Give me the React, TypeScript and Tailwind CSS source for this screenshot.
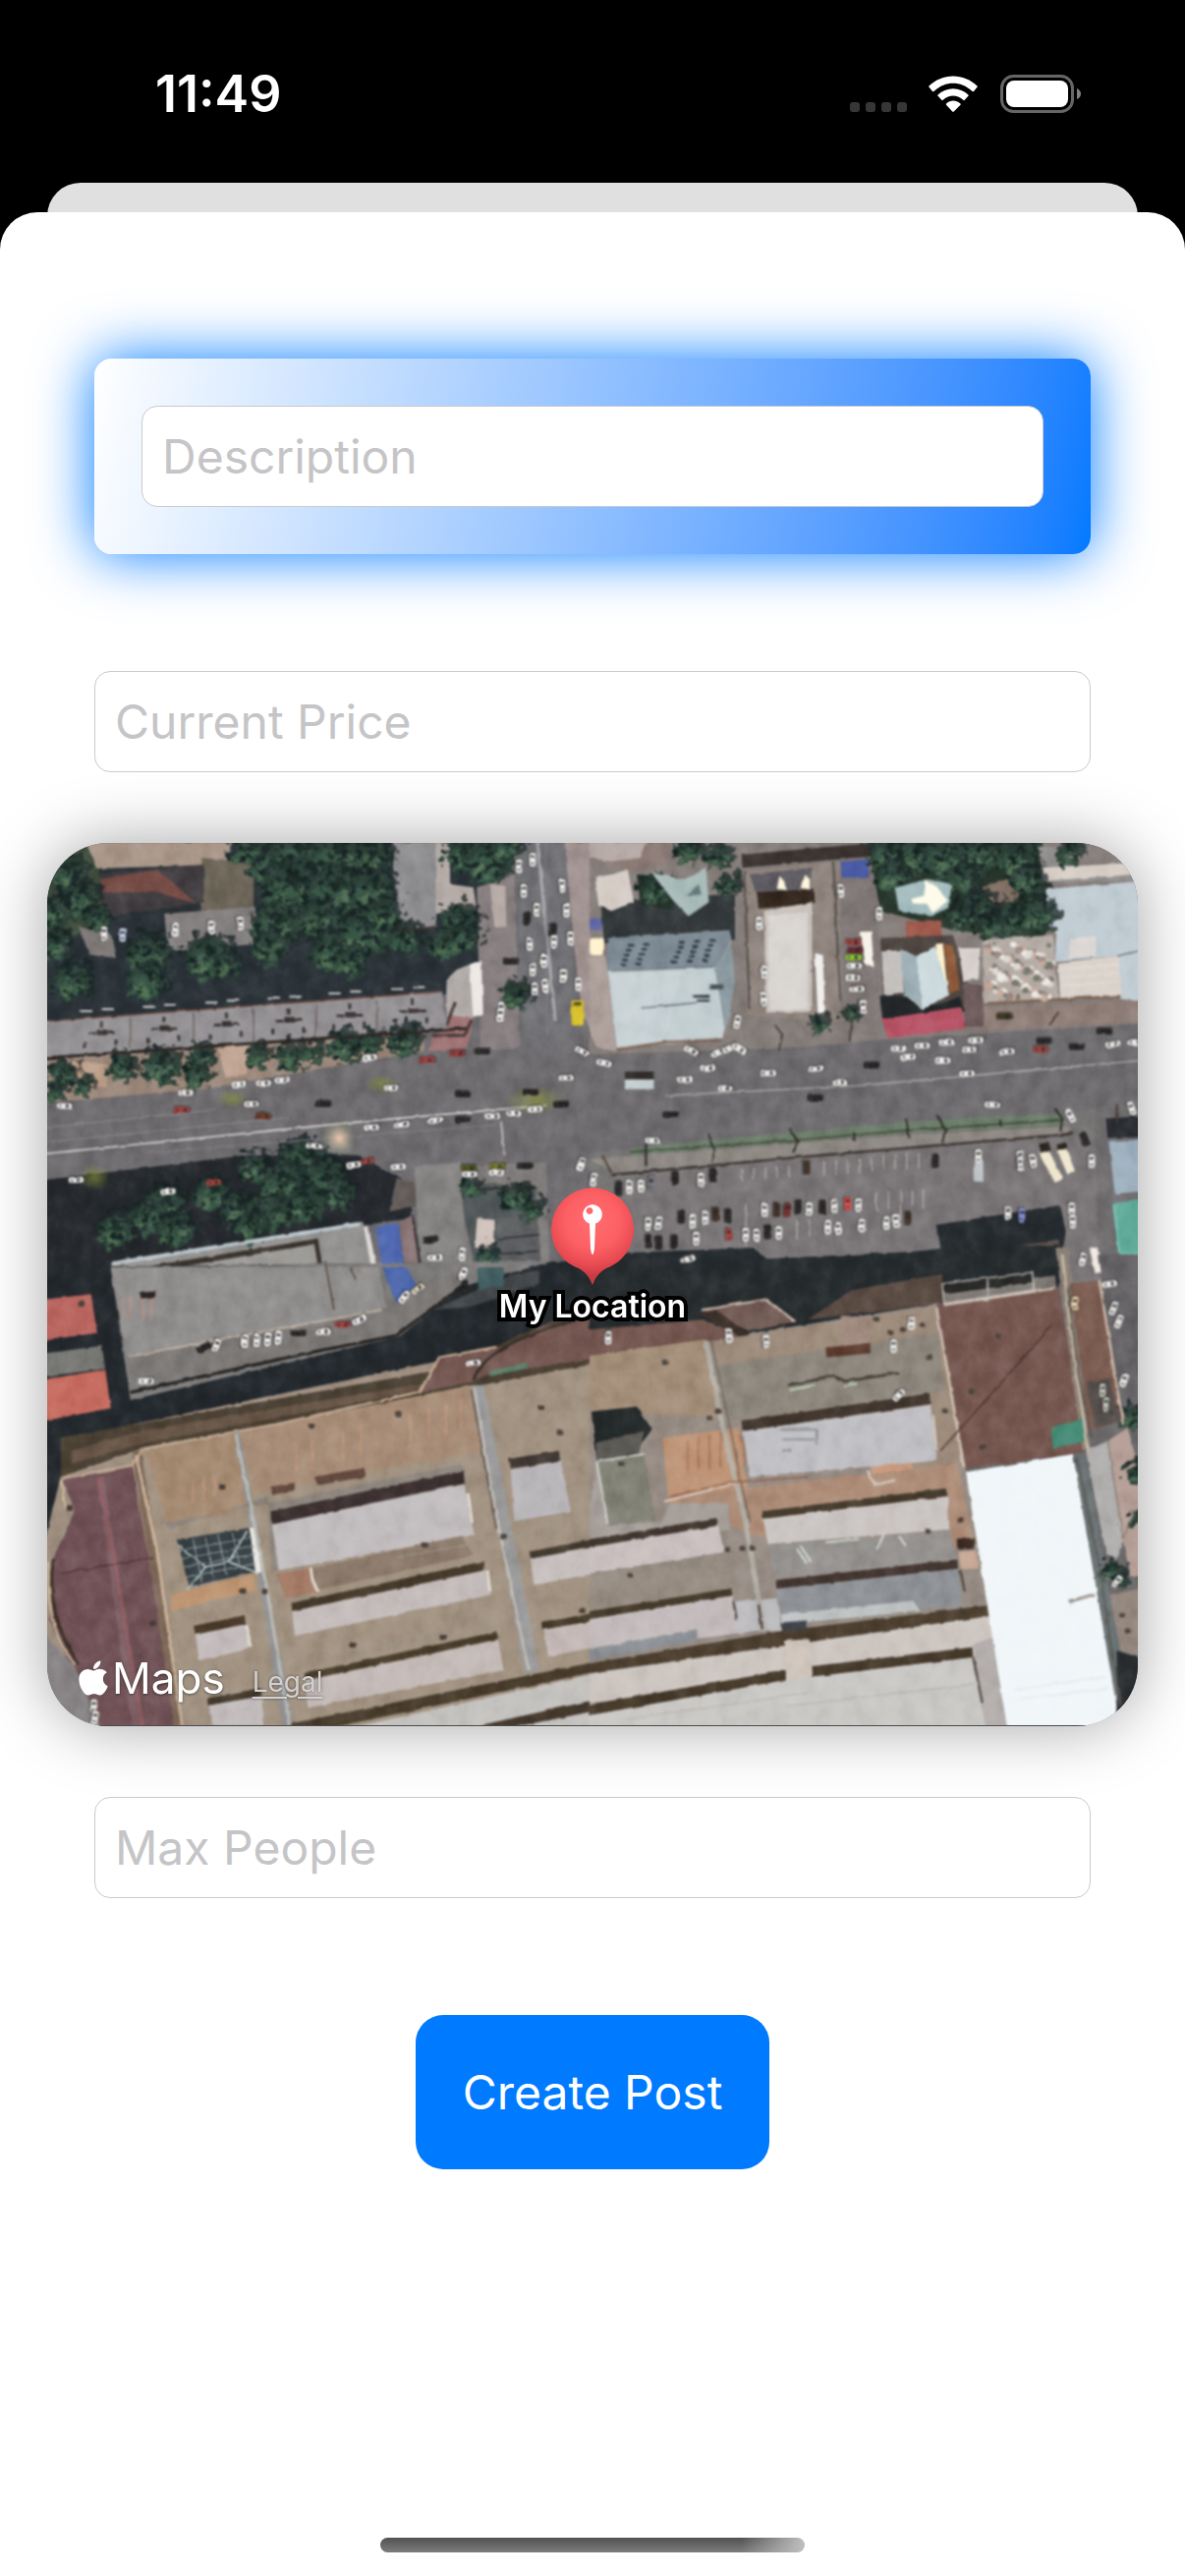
import React from "react";
import { FaApple } from "react-icons/fa";

type Shape = [fill: string, points: string];
type Stroke = [color: string, width: number, d: string];
type Blob = [x: number, y: number, r: number];
type Car = [x: number, y: number, angle: number, color: string];

/* Each quadrant of the aerial view is drawn in its own local units. */
const NW = "translate(-8 -18) scale(0.3635 0.3333)";
const NE = "translate(552 -18) scale(0.37 0.3333)";
const SW = "translate(-8 432) scale(0.3635 0.3333)";
const SE = "translate(552 432) scale(0.37 0.3333)";

const nwGround: Shape[] = [
  ["#6e6c6f", "0,0 1600,0 1600,1400 0,1400"],
  ["#2b3338", "0,0 1260,0 1240,470 1120,520 0,610"],
  ["#3d4b3c", "0,50 160,50 180,290 110,330 0,380"],
  ["#a89689", "130,50 540,50 520,120 160,132"],
  ["#6c6558", "455,100 600,110 600,260 450,280"],
  ["#413d40", "165,150 460,120 462,235 185,280"],
  ["#754b45", "170,165 330,135 380,180 440,240 330,205 180,205"],
  ["#858080", "350,270 600,250 640,360 360,385"],
  ["#7d7775", "110,310 200,330 215,405 140,395"],
  ["#8f8e91", "985,50 1125,50 1110,308 1004,318"],
  ["#b3aaa6", "1110,50 1150,50 1150,180 1215,190 1225,260 1110,270"],
  ["#877e7f", "1225,190 1330,150 1345,680 1235,690"],
  ["#b5a9a4", "1262,180 1305,185 1308,310 1275,312"],
  ["#949194", "0,600 1128,508 1140,618 0,712"],
  ["#b0aba9", "1140,470 1170,440 1240,410 1243,582 1215,586 1140,615"],
  ["#ece8e4", "1205,425 1236,412 1243,580 1214,582"],
  ["#a07576", "1150,580 1215,590 1200,680 1090,690 1100,645 1140,620"],
  ["#9c897c", "0,716 1080,632 1075,690 800,740 500,800 0,850"],
  ["#c3a796", "500,680 585,670 580,760 520,770"],
  ["#bda18b", "90,720 190,730 190,800 100,790"],
  ["#a29492", "1470,50 1600,50 1600,650 1545,630 1515,560"],
  ["#717074", "1335,50 1470,50 1512,640 1400,700 1350,620"],
  ["#262a2e", "0,1085 560,1010 800,1000 900,1010 1045,1100 1040,1200 200,1335 230,1400 0,1400"],
  ["#635b58", "1000,1080 1050,1090 1055,1160 980,1180"],
  ["#868383", "1050,1040 1180,1030 1200,1400 1070,1400"],
  ["#807c7b", "1180,1040 1420,1030 1430,1400 1200,1400"],
  ["#535a5c", "1180,1090 1390,1100 1400,1340 1230,1400 1190,1200"],
  ["#939290", "200,1338 905,1210 965,1400 215,1400"],
  ["#3c352f", "315,1345 780,1262 800,1400 790,1400 770,1280 320,1362"],
  ["#9d9b98", "320,1366 770,1280 785,1400 320,1400"],
  ["#5069b0", "942,1228 1005,1212 1030,1400 965,1400"],
  ["#8b7678", "1005,1212 1045,1190 1065,1400 1032,1400"],
  ["#cfc2bb", "1225,1200 1275,1205 1275,1290 1220,1290"],
  ["#5f6062", "1280,1200 1395,1195 1405,1340 1290,1345"],
  ["#3c6461", "1225,1310 1285,1300 1285,1400 1220,1400"],
];

const nwTrees: Blob[] = [
  [70, 150, 60], [110, 230, 60], [40, 270, 50], [45, 370, 45], [90, 480, 60], [300, 400, 65], [300, 480, 62],
  [470, 410, 75], [520, 430, 40], [640, 130, 60], [580, 80, 50], [720, 100, 80], [830, 100, 90], [930, 100, 60],
  [700, 200, 95], [820, 210, 90], [930, 200, 70], [660, 310, 75], [780, 290, 65], [640, 375, 55], [820, 390, 70],
  [910, 330, 85], [870, 420, 50], [1020, 350, 50], [1170, 300, 60], [1130, 370, 50], [1190, 350, 45], [1180, 90, 55],
  [1250, 110, 75], [1310, 70, 45], [960, 270, 50], [160, 290, 40], [1330, 520, 45],
  [230, 740, 42], [340, 740, 55], [450, 710, 40], [610, 710, 36], [700, 710, 45], [760, 700, 32], [850, 680, 50],
  [1020, 660, 50], [920, 670, 40], [60, 760, 42], [120, 800, 32], [440, 770, 42], [40, 820, 30],
  [600, 1050, 48], [730, 1030, 70], [680, 1100, 70], [800, 1090, 70], [830, 1130, 50], [480, 1130, 55], [560, 1180, 60],
  [350, 1160, 60], [300, 1200, 55], [210, 1240, 55], [380, 1240, 55], [650, 1190, 60], [740, 1160, 60], [590, 1230, 50],
  [1330, 1140, 45], [1210, 1110, 32], [1380, 1180, 32], [1250, 1320, 30],
];

const nePitchedRoof: Shape[] = [
  ["#9fb1b7", "855,375 898,400 915,562 868,520"],
  ["#ccdade", "898,400 950,368 990,518 915,562"],
];

const neGround: Shape[] = [
  ["#857d79", "0,0 1600,0 1600,640 0,700"],
  ["#343a3c", "30,230 400,210 400,350 40,360"],
  ["#8b7a76", "0,50 220,50 215,120 120,140 0,110"],
  ["#b6aaa7", "0,50 160,50 140,100 60,110 0,100"],
  ["#d5ccc6", "15,160 60,150 105,135 122,235 60,262 25,245"],
  ["#26332b", "130,150 230,160 230,260 140,240"],
  ["#3b3431", "418,90 770,55 775,95 420,130"],
  ["#90847e", "425,140 690,110 690,600 430,580"],
  ["#5e5c62", "440,150 610,130 610,215 465,225"],
  ["#35281f", "460,205 618,195 620,240 465,255"],
  ["#c9c2bd", "480,262 612,235 612,570 486,572"],
  ["#d9d5d0", "490,275 600,265 600,560 495,565"],
  ["#f1efec", "620,395 642,395 648,578 628,578"],
  ["#7f7776", "690,100 790,100 800,640 700,640"],
  ["#4a5ba5", "690,112 768,105 768,160 695,160"],
  ["#2a392f", "765,50 1245,50 1290,280 1240,350 1000,320 800,260"],
  ["#837064", "1080,190 1160,160 1185,220 1120,265"],
  ["#9c584b", "870,295 965,290 970,350 870,350"],
  ["#504743", "800,345 1000,335 1040,480 1030,560 810,600"],
  ["#24282a", "798,520 870,520 915,560 1020,525 1030,570 805,592"],
  ["#c3c0be", "803,385 860,382 865,510 810,518"],
  ["#fff1d0", "952,362 972,360 986,512 965,515"],
  ["#8f5c3c", "974,360 1000,370 1020,500 990,515"],
  ["#b85668", "805,592 1020,555 1035,620 820,650"],
  ["#6b5859", "1030,480 1080,490 1085,615 1030,615"],
  ["#d8d2cd", "1015,375 1075,375 1070,470 1028,475"],
  ["#b5aca6", "1080,350 1275,335 1290,530 1085,548"],
  ["#f6f2ea", "745,325 775,325 782,430 755,425"],
  ["#93918f", "1235,65 1290,65 1330,130 1500,110 1500,170 1245,175"],
  ["#d8cfc8", "1240,130 1500,115 1500,150 1250,170"],
  ["#c1ccd3", "1255,195 1520,170 1520,540 1460,530 1450,400 1280,415 1285,320 1262,310"],
  ["#ded9d5", "1320,345 1392,338 1394,398 1320,405"],
  ["#d9d2cb", "1288,420 1455,398 1465,520 1295,530"],
  ["#907f79", "1085,558 1520,535 1520,600 1080,625"],
  ["#7f8c95", "50,345 385,320 390,345 345,440 50,445"],
  ["#c3ced1", "50,445 350,432 375,600 365,655 75,682"],
  ["#8c9aa1", "345,440 390,345 400,480 375,640"],
  ["#c9d2d5", "60,455 250,445 210,660 78,672"],
  ["#ad9f9a", "0,400 45,400 75,690 20,680 0,640"],
  ["#6e6c6f", "0,700 400,700 800,655 1600,600 1600,1000 0,1090"],
  ["#777573", "0,1000 1300,890 1400,860 1440,1400 0,1400"],
  ["#6d7f6c", "110,985 870,905 1290,880 1300,915 870,940 110,1010"],
  ["#8f8984", "0,1020 880,945 1320,920 1320,940 950,975 70,1060"],
  ["#7a7677", "60,1070 1330,945 1430,1000 1450,1400 60,1400"],
  ["#716e70", "1390,860 1600,830 1600,1400 1400,1400"],
  ["#292c31", "1420,895 1600,885 1600,950 1425,955"],
  ["#9fb1bf", "1428,965 1600,955 1600,1110 1445,1125"],
  ["#60aa99", "1440,1155 1600,1130 1600,1310 1455,1310"],
  ["#272c30", "953,1220 1295,1160 1310,1240 1290,1400 985,1400"],
  ["#272c30", "0,1310 450,1290 540,1370 700,1330 980,1290 1000,1400 0,1400"],
  ["#5a514b", "985,1325 1290,1265 1295,1315 985,1380"],
];

const neOverTrees: Shape[] = [
  ["#a9bcba", "170,145 262,165 320,128 328,235 272,278 230,230"],
  ["#6d8283", "265,215 300,180 308,212"],
  ["#a6bec0", "840,190 930,165 995,180 990,250 940,278 850,260"],
  ["#fffbea", "925,170 955,190 985,230 945,268 928,240 890,240 885,225 920,215"],
];

const neTrees: Blob[] = [
  [270, 80, 40], [350, 95, 42], [180, 200, 48], [380, 190, 35], [820, 90, 60], [900, 90, 60], [980, 100, 70],
  [1080, 90, 60], [830, 160, 50], [1020, 170, 50], [1170, 100, 60], [1200, 170, 50], [1060, 250, 50], [1150, 290, 55],
  [1230, 280, 55], [1100, 310, 40], [1020, 280, 40], [630, 610, 28], [720, 580, 26], [1320, 85, 40],
];

const swGround: Shape[] = [
  ["#9f9082", "0,0 1600,0 1600,1450 0,1450"],
  ["#24292e", "0,0 1600,-20 1600,180 1280,250 260,480 60,640 0,900"],
  ["#7e7c7b", "200,0 1440,-20 1180,60 1010,210 255,405"],
  ["#918f8d", "200,0 950,0 975,130 245,270"],
  ["#7d7977", "245,272 930,150 1090,40 1200,0 1180,60 1010,205 260,365"],
  ["#b9655f", "0,100 145,82 162,200 0,225"],
  ["#777773", "0,265 175,240 185,310 0,335"],
  ["#c66c60", "0,345 185,312 200,430 0,472"],
  ["#45484a", "1330,20 1400,10 1400,50 1210,120 1100,130"],
  ["#415d5f", "1225,0 1300,0 1300,60 1230,70"],
  ["#4e68ad", "960,0 1030,0 1055,55 1000,110"],
  ["#4b4134", "60,520 1110,315 1280,240 1600,80 1600,290 1090,400 280,555 60,640"],
  ["#675547", "90,600 280,540 1070,375 1100,350 280,500 90,560"],
  ["#755752", "1120,280 1300,240 1410,180 1600,150 1600,270 1250,330 1210,350 1070,380"],
  ["#a19281", "280,555 1600,285 1600,1450 400,1450"],
  ["#a58a72", "300,560 540,505 590,740 360,790"],
  ["#a78d78", "560,500 1210,360 1245,560 600,690"],
  ["#705256", "60,640 260,605 395,1450 180,1450 80,1200 30,1080 35,900 100,740"],
  ["#806165", "160,640 180,635 295,1450 265,1450"],
  ["#878385", "0,1110 40,1150 100,1220 170,1400 170,1450 0,1450"],
  ["#806b5b", "260,560 285,560 410,1450 385,1450"],
  ["#939294", "545,505 560,500 720,1450 690,1450"],
  ["#8e867e", "350,780 600,730 1180,600 1190,620 1210,820 650,930 640,700 360,800"],
  ["#3d3231", "648,745 1188,620 1190,660 650,785"],
  ["#c2bdbe", "652,785 1190,662 1218,818 670,925"],
  ["#394246", "385,832 590,795 605,930 420,975"],
  ["#eae7e1", "588,795 603,795 622,930 606,935"],
  ["#bd9572", "370,1000 600,935 610,985 370,1050"],
  ["#a67e69", "665,935 760,920 780,995 690,1010"],
  ["#8c7a6b", "760,920 1180,820 1215,880 780,985"],
  ["#463b2b", "706,1025 1245,897 1247,925 708,1050"],
  ["#c4bcbb", "708,1050 1250,925 1265,1000 715,1125"],
  ["#473827", "432,1095 575,1062 578,1088 437,1122"],
  ["#c4bcbc", "437,1122 578,1090 590,1165 448,1200"],
  ["#473b2a", "742,1240 1282,1112 1285,1135 745,1262"],
  ["#c4bbb8", "745,1262 1285,1137 1300,1230 752,1345"],
  ["#44392c", "470,1315 620,1285 622,1310 472,1338"],
  ["#c2bcbc", "472,1338 622,1310 630,1400 485,1400"],
  ["#473b2b", "710,1392 1600,1195 1600,1225 800,1410 690,1410"],
  ["#c4c2bf", "900,1400 1600,1230 1600,1450 800,1450"],
  ["#463a2e", "1230,1400 1600,1310 1600,1345 1300,1410"],
  ["#9b9b9b", "1210,360 1245,360 1400,1230 1360,1240"],
  ["#423a35", "1315,585 1455,560 1458,590 1320,615"],
  ["#b9b6ba", "1320,618 1460,590 1488,745 1330,775"],
  ["#463d31", "1372,868 1600,820 1600,845 1375,890"],
  ["#c6bfbe", "1375,890 1600,845 1600,925 1385,970"],
  ["#463b2b", "1408,1085 1600,1045 1600,1070 1412,1106"],
  ["#c4b8b6", "1412,1106 1600,1070 1600,1150 1425,1188"],
];

const seGround: Shape[] = [
  ["#968c84", "0,280 960,110 1160,1450 0,1450"],
  ["#272c2f", "0,0 1290,-70 1290,60 960,110 0,280"],
  ["#755851", "0,190 310,160 430,210 0,275"],
  ["#745d57", "310,130 490,95 570,165 440,195"],
  ["#3c312a", "300,140 350,130 445,212 415,212"],
  ["#5a4b43", "720,70 970,20 970,110 600,160"],
  ["#a38e79", "0,270 320,220 360,460 0,440"],
  ["#9d8b7b", "330,225 950,120 1030,610 930,640 420,460"],
  ["#8e877d", "340,300 960,200 975,380 380,470"],
  ["#be9477", "200,520 410,490 440,720 220,740"],
  ["#c99b7f", "770,600 880,575 890,620 780,640"],
  ["#ad8d78", "220,700 1010,600 1060,850 450,820"],
  ["#252a2a", "5,440 130,425 172,495 120,570 20,590"],
  ["#5b5954", "20,535 150,500 135,570 20,590"],
  ["#828277", "22,590 150,570 180,770 55,792"],
  ["#a59e99", "0,720 20,600 50,790 200,775 220,720 380,720 390,800 0,880"],
  ["#42372f", "418,468 935,385 937,418 420,500"],
  ["#c0bfc3", "422,500 938,420 955,590 440,640"],
  ["#463d2f", "475,745 980,675 985,698 477,768"],
  ["#cac5c3", "478,768 985,700 990,800 490,845"],
  ["#969290", "490,850 990,800 1010,900 510,950"],
  ["#453833", "512,955 1012,892 1014,920 514,982"],
  ["#8e9297", "514,982 1015,920 1025,1035 525,1060"],
  ["#bec2c3", "525,1060 890,1018 910,1050 530,1090"],
  ["#42372f", "0,830 350,765 354,788 0,855"],
  ["#c9c0bf", "0,855 355,790 370,870 0,935"],
  ["#968c82", "0,935 380,870 400,980 0,1050"],
  ["#463b2b", "0,1050 390,980 392,1002 0,1075"],
  ["#c4bcbc", "0,1075 392,1003 405,1080 520,1100 0,1180"],
  ["#8e9297", "0,1165 295,1105 297,1140 0,1200"],
  ["#bcbbbd", "400,1020 515,1010 530,1110 410,1110"],
  ["#4c3f30", "0,1210 530,1110 1095,1032 1098,1065 0,1240"],
  ["#ccc5c0", "0,1240 1100,1066 1125,1200 0,1330"],
  ["#d0c6bd", "535,1140 605,1135 612,1250 540,1258"],
  ["#473b2c", "0,1335 540,1230 540,1260 0,1368"],
  ["#473b2c", "612,1218 1053,1160 1055,1190 614,1250"],
  ["#cac8c5", "0,1368 540,1260 1055,1192 1085,1330 1155,1300 1160,1450 0,1450"],
  ["#b3aeac", "1055,1150 1115,1130 1160,1420 1090,1420"],
  ["#755750", "955,115 1290,65 1365,565 1035,615"],
  ["#807b76", "970,75 1280,25 1285,65 975,110"],
  ["#292927", "975,50 1218,15 1220,45 978,82"],
  ["#f1f6f9", "1035,625 1330,570 1450,1340 1440,1450 1155,1450"],
  ["#8a8077", "1282,-60 1318,-60 1375,560 1355,560"],
  ["#7b5c51", "1320,50 1400,40 1465,470 1375,500"],
  ["#56504d", "1365,350 1430,340 1460,470 1390,490"],
  ["#666467", "1400,-40 1600,-40 1600,560 1470,480"],
  ["#6b7476", "1330,570 1362,565 1480,1300 1450,1330"],
  ["#b0afae", "1365,560 1425,530 1470,830 1450,890 1420,870"],
  ["#b59f97", "1425,530 1480,490 1600,960 1490,940 1465,830"],
  ["#94877e", "1430,1000 1600,960 1600,1250 1460,1170"],
  ["#292c2e", "1450,1170 1600,1220 1600,1450 1450,1380"],
  ["#448a74", "1270,492 1360,462 1365,530 1275,552"],
];

const seTrees: Blob[] = [[1495, 460, 40], [1500, 630, 34], [1505, 770, 26], [1430, 930, 32], [1460, 960, 22]];

const nwLines: Stroke[] = [
  ["#c9c5c4", 6, "M0 1005 L900 905 L1420 855"],
  ["#89868a", 4, "M0 925 L500 868"],
  ["#87848a", 4, "M0 970 L700 892"],
  ["#87848a", 3, "M300 1000 L1280 915"],
  ["#2c2825", 9, "M0 712 L440 678 L1200 620"],
  ["#6f4d42", 5, "M0 600 L1125 508"],
  ["#6a605b", 4, "M255 590 V680 M432 572 V672 M600 560 V660 M775 545 V648 M945 535 V635"],
  ["#a9a8ad", 9, "M1395 50 L1445 600"],
  ["#7d7b80", 5, "M1420 50 L1420 640"],
  ["#d7d2cd", 4, "M1293 905 L1303 1010"],
  ["#4a3b36", 9, "M1100 642 H1190 L1210 595 M1140 610 L1165 540"],
  ["#bac4ca", 12, "M205 1338 L895 1218"],
  ["#332c2a", 6, "M1045 1190 L1075 1400 M1225 1110 H1395"],
  ["#dedbd8", 14, "M915 1225 L945 1400"],
  ["#30343a", 5, "M1285 1263 L1400 1250 M1285 1310 L1400 1300"],
  ["#3b332e", 6, "M1005 320 L1110 312"],
];
const neLines: Stroke[] = [
  ["#b9b6b2", 4, "M210 825 L740 795 L1520 718"],
  ["#37302d", 7, "M60 1068 L560 1015 L950 978 L1330 942"],
  ["#474f3f", 6, "M110 998 L560 962 L870 932 L1300 900"],
  ["#332f2c", 6, "M325 940 L345 990 L338 1030 M550 925 L572 965 L560 1000 M870 895 L880 955 M955 885 L978 930 L970 970 M1280 865 L1300 895 L1295 935 M155 965 V1040 M728 935 V965 M1130 900 V920"],
  ["#bdb9b6", 3, "M420 1050 v36 M452 1047 v36 M484 1045 v36 M516 1042 v36 M548 1040 v36 M645 1025 v45 M678 1022 v45 M710 1020 v45 M742 1017 v45 M775 1012 v45 M808 1008 v45 M840 1005 v45 M872 1002 v45 M905 1000 v45"],
  ["#bdb9b6", 3, "M430 1155 v130 M570 1205 v60 M605 1205 v50 M790 1120 v60 M822 1118 v55 M855 1115 v90 M888 1112 v50 M918 1110 v60"],
  ["#55504d", 6, "M425 140 L440 560 M670 110 L690 540"],
  ["#4a403a", 6, "M520 690 L530 640 L510 610 M715 660 L720 600 L705 570 M1265 610 L1290 570 M60 1060 L35 1010 M1450 850 V910"],
  ["#616e74", 4, "M145 558 L295 542 M60 445 L345 432 M1450 400 L1520 380"],
  ["#7a5f50", 8, "M75 685 L215 662 L365 655 M1085 545 L1290 532 L1460 522"],
  ["#7bc4b4", 6, "M1442 1158 L1458 1308 H1520"],
  ["#e8ddd1", 4, "M1295 440 L1455 425 M1295 465 L1455 450 M1295 490 L1455 478"],
];
const swLines: Stroke[] = [
  ["#c2ab94", 7, "M60 645 L260 605 L285 555 L680 475 L1065 380 L1120 275 L1280 243"],
  ["#cdb49d", 8, "M270 570 L330 870 L400 1400"],
  ["#945f63", 8, "M165 640 L210 890 L290 1400"],
  ["#55393b", 5, "M60 935 L320 885"],
  ["#b8b9b4", 9, "M550 510 L590 720 L640 1000 L700 1400"],
  ["#c0bdb9", 7, "M1218 370 L1280 760 L1370 1230"],
  ["#6a5f57", 5, "M1210 375 L1280 800"],
  ["#282624", 10, "M255 382 L750 262 L1000 208 L1190 50"],
  ["#bcaea2", 6, "M250 272 L960 130"],
  ["#363129", 8, "M1215 345 C1240 260 1380 180 1600 140"],
  ["#b7c6c6", 5, "M388 848 L465 915 L530 900 L582 805 M465 915 L415 985 M530 900 L605 930"],
  ["#8f9ea0", 3, "M390 865 L595 825 M398 890 L600 850 M405 915 L605 875 M412 945 L605 905 M430 830 L455 960 M465 825 L490 950 M500 815 L525 940 M540 810 L565 930"],
  ["#ceb99b", 6, "M60 650 L75 740 M25 900 Q20 1120 100 1210"],
  ["#3e3129", 9, "M40 890 Q15 1060 110 1210"],
  ["#e0dbd0", 8, "M760 920 L765 955 L780 990 M1200 690 L1212 780 M1255 925 L1262 990 M580 1090 L592 1160"],
  ["#5f534b", 5, "M800 -20 L825 130 M870 0 L885 40"],
  ["#5b7e68", 16, "M1260 325 L1365 300"],
  ["#989287", 4, "M1000 885 L1300 828 M1300 828 L1600 770 M810 1195 L1290 1080"],
  ["#bd967c", 5, "M430 650 v70 M460 640 v70 M490 640 v60 M720 540 v80 M765 530 v90 M850 500 v90 M900 480 v90 M1040 450 v100 M1090 430 v90 M1140 420 v90 M1180 400 v100"],
];
const seLines: Stroke[] = [
  ["#d8cabb", 6, "M955 125 L1030 610 M975 115 L1280 65 M310 130 L485 98 L565 165"],
  ["#b3b0a8", 14, "M320 225 L365 480 L430 780 L480 1110"],
  ["#71655c", 4, "M335 225 L385 480 L440 780"],
  ["#4f302b", 4, "M965 560 L1130 355 L1270 180"],
  ["#c8b8a3", 8, "M1300 -40 L1330 250 L1372 560"],
  ["#5b564f", 5, "M1315 60 L1345 330 L1380 520 M1340 580 L1400 900 L1460 1340"],
  ["#3b3a31", 7, "M545 360 L640 340 L670 330 L700 348 L855 322"],
  ["#bbd0b1", 7, "M550 375 L620 360 M700 365 L735 355"],
  ["#8d5a43", 5, "M220 700 L400 655 L600 640"],
  ["#dad1c8", 6, "M205 715 L400 660 M945 450 L955 560 M765 620 L785 665 L840 650"],
  ["#cfcac5", 4, "M970 50 L975 110 L1222 70 L1218 15 Z M1095 30 V100"],
  ["#d8c4b2", 6, "M1402 40 L1468 480"],
  ["#b0adab", 3, "M540 1340 L1080 1270 M100 1380 L600 1300"],
  ["#dbe1e4", 3, "M1170 1290 L1420 1250 M1170 1320 L1430 1285"],
  ["#4e4440", 6, "M1020 925 L1032 990 M395 1020 L405 1075 M465 1030 L475 1105 M1055 1190 L1080 1330"],
  ["#d7e2e0", 5, "M580 850 L610 900 M570 860 L600 905 M790 860 L810 815 M850 820 L870 850 M650 840 L740 830"],
  ["#8a8f91", 6, "M525 495 H625 V540 M530 525 H620 M530 560 H555"],
  ["#d4d6d0", 5, "M20 595 L50 780 M22 592 L150 570"],
  ["#a8775a", 5, "M415 510 L430 600 M360 500 v110 M330 510 v110 M300 520 v100 M270 530 v90"],
  ["#9b9087", 8, "M1320 1020 L1390 998"],
  ["#7a746c", 3, "M1425 530 L1468 830 L1500 740"],
];

const W = "#eeedea";
const K = "#262423";
const R = "#a3403c";
const nwCars: Car[] = [
  [1380, 105, 0, W], [1342, 125, 0, W], [1355, 200, 0, W], [1392, 258, 0, W], [1365, 285, 0, K], [1372, 362, 0, W],
  [1412, 415, 0, W], [1380, 440, 0, W], [1416, 490, 0, W], [1386, 500, 0, W], [1462, 185, 0, W], [1475, 260, 0, W],
  [1438, 320, 0, K], [1440, 356, 0, W], [1486, 345, 0, W], [1465, 460, 0, W], [1508, 485, 0, W], [1520, 690, 120, W],
  [1475, 772, 92, W], [985, 802, 88, W], [1185, 820, 92, K], [1375, 815, 90, K], [1460, 852, 88, K], [595, 850, 90, W],
  [795, 850, 90, K], [400, 868, 92, R], [628, 888, 95, "#713a22"], [930, 922, 86, W], [1015, 912, 86, W], [1108, 900, 86, W],
  [1185, 897, 86, K], [1268, 886, 84, W], [1328, 878, 84, W], [1388, 866, 84, W], [770, 978, 88, W], [915, 1025, 82, R],
  [880, 1036, 82, W], [1005, 1042, 86, W], [103, 1082, 88, W], [70, 856, 90, W], [488, 1090, 84, R], [360, 1118, 84, W],
  [380, 320, 0, W], [480, 312, 0, W], [562, 300, 0, W], [232, 335, 0, "#c5cde3"], [180, 330, 0, W],
  [1240, 690, 90, K], [1170, 696, 90, R], [1085, 716, 90, R], [925, 710, 75, W], [680, 778, 88, W], [628, 786, 88, W],
  [560, 790, 88, W], [410, 816, 88, W], [1515, 1035, 20, W], [1550, 1085, 0, W], [1320, 415, 90, K], [1095, 1265, 80, K],
  [1108, 1320, 90, W], [1183, 1310, 5, W], [1188, 1360, 30, W], [1200, 1045, 90, "#55571f"], [1280, 1040, 90, "#6f7422"],
  [1205, 1065, 90, W], [1280, 1060, 90, W], [1358, 1040, 90, K], [1292, 560, 0, W], [1290, 580, 0, W],
];
const neCars: Car[] = [
  [40, 725, 105, W], [280, 688, 120, W], [355, 692, 60, W], [385, 680, 60, W], [412, 682, 120, W], [325, 740, 90, W],
  [262, 776, 90, W], [372, 802, 88, W], [492, 756, 88, W], [622, 742, 86, W], [775, 732, 90, K], [690, 786, 88, W],
  [850, 680, 88, W], [915, 672, 88, W], [982, 662, 88, W], [1062, 655, 88, W], [1045, 684, 88, W], [876, 706, 88, W],
  [972, 718, 88, W], [1038, 757, 88, W], [1148, 690, 86, W], [1250, 658, 88, K], [1240, 684, 88, R], [1340, 676, 90, K],
  [1440, 668, 88, W], [1415, 628, 92, K], [1500, 664, 90, W], [620, 832, 90, K], [222, 884, 90, K], [1108, 852, 92, W],
  [172, 962, 90, W], [1322, 888, -25, W], [1362, 958, -20, K], [1380, 1025, 0, W], [10, 1082, 10, W],
  [108, 1105, 0, W], [140, 1100, 0, W], [168, 1092, 0, "#777982"], [235, 1078, 0, K], [305, 1082, 0, W], [338, 1068, 0, K],
  [80, 1110, 0, K], [596, 1045, 0, "#413126"], [950, 1025, 0, K], [160, 1218, 0, W], [188, 1215, 0, W], [252, 1195, 0, K],
  [282, 1210, 0, W], [317, 1198, 0, W], [346, 1188, 0, "#413126"], [380, 1192, 0, K], [480, 1175, 0, W],
  [514, 1175, 0, "#413126"], [542, 1175, 0, "#7b3230"], [573, 1165, 0, K], [603, 1172, 0, W], [640, 1165, 0, K],
  [672, 1162, 0, W], [709, 1155, 0, "#e44a48"], [738, 1160, 0, W], [162, 1270, 0, K], [190, 1275, 0, K], [232, 1272, 0, K],
  [292, 1262, 0, W], [383, 1250, 0, R], [428, 1250, 0, W], [458, 1252, 0, W], [490, 1242, 0, K], [519, 1245, 0, W],
  [654, 1225, 0, W], [684, 1232, 0, W], [748, 1222, 0, W], [815, 1215, 0, W], [842, 1208, 0, W], [875, 1200, 0, "#413126"],
  [1068, 1010, 0, W], [1183, 1015, -5, W], [1185, 1035, -5, W], [1218, 1025, -10, W], [1150, 1185, 0, W],
  [1188, 1190, 0, "#8b98d8"], [1325, 1172, 0, W], [1328, 1210, 0, W], [1355, 1325, 10, W], [600, 1345, 0, R], [647, 1350, 0, W],
  [555, 1360, -10, W], [270, 1325, 70, W], [690, 200, 0, W], [795, 270, 0, W], [750, 555, 0, W], [725, 465, 90, W],
  [728, 428, 90, W], [725, 355, 90, R], [728, 380, 90, "#6c2730"], [725, 402, 90, "#8fc636"], [735, 498, 90, W],
  [480, 450, 0, W], [478, 530, 0, W], [465, 300, 0, W], [405, 600, 10, W], [1140, 582, 90, "#413a22"], [1490, 865, -20, W],
];
const swCars: Car[] = [
  [300, 346, 88, W], [495, 238, 20, W], [575, 225, 5, W], [608, 222, 5, W], [638, 220, 5, W], [668, 214, 5, W],
  [795, 196, 90, W], [850, 174, 90, R], [895, 160, 60, W], [725, 200, 90, K], [460, 245, 60, K], [1020, 90, 30, W],
  [1060, 65, 50, "#dad1b5"], [1185, 20, 20, W], [1190, 60, 0, K], [152, 1340, 0, W], [155, 1375, 10, W], [1215, 292, 80, W],
];
const seCars: Car[] = [
  [1440, 125, 20, W], [1455, 165, 20, W], [1470, 345, 20, W], [1430, 50, 80, W], [1410, 375, 0, "#c9c9c0"],
  [1420, 420, 0, "#c9c9c0"], [1450, 960, 30, W], [50, 215, 0, W], [835, 240, 0, W], [850, 390, 40, W],
  [382, 210, 0, W], [484, 225, 0, W], [885, 170, 0, W], [1335, 110, 0, "#efd7b4"],
];

function Shapes({ items }: { items: Shape[] }) {
  return (
    <>
      {items.map(([fill, points], i) => (
        <polygon key={i} points={points} fill={fill} />
      ))}
    </>
  );
}

function Strokes({ items }: { items: Stroke[] }) {
  return (
    <>
      {items.map(([color, width, d], i) => (
        <path key={i} d={d} stroke={color} strokeWidth={width} fill="none" strokeLinejoin="round" />
      ))}
    </>
  );
}

function Trees({ items }: { items: Blob[] }) {
  return (
    <g filter="url(#foliage)">
      {items.map(([x, y, r], i) => (
        <g key={i}>
          <circle cx={x + 8} cy={y - 12} r={r} fill="#1a2425" opacity="0.7" />
          <circle cx={x} cy={y} r={r * 0.9} fill="#2f443a" />
          <circle cx={x - r * 0.15} cy={y + r * 0.2} r={r * 0.6} fill="#3a5848" />
          <circle cx={x - r * 0.3} cy={y + r * 0.35} r={r * 0.26} fill="#557355" />
          <circle cx={x + r * 0.35} cy={y + r * 0.1} r={r * 0.2} fill="#4e6b54" />
          <circle cx={x + r * 0.1} cy={y - r * 0.35} r={r * 0.22} fill="#1e2c29" />
        </g>
      ))}
    </g>
  );
}

function Cars({ items }: { items: Car[] }) {
  return (
    <>
      {items.map(([x, y, angle, color], i) => (
        <g key={i} transform={`translate(${x} ${y}) rotate(${angle})`}>
          <rect x="-12" y="-24" width="22" height="46" rx="6" fill="#1f1d1d" opacity="0.5" />
          <rect x="-8" y="-21" width="18" height="42" rx="6" fill={color} />
          <rect x="-5" y="-12" width="12" height="8" rx="2" fill="#2c2c30" opacity="0.85" />
          <rect x="-4" y="8" width="10" height="6" rx="2" fill="#39393d" opacity="0.7" />
        </g>
      ))}
    </>
  );
}

const roofVents: [number, number][] = [[175, 630], [350, 617], [525, 604], [700, 592], [870, 576], [1045, 563]];
const windows = Array.from({ length: 5 }, (_, r) => [0, 1, 3, 4, 5].map((c) => [105 + c * 42 + (c > 1 ? 15 : 0) - r * 5, 362 + r * 15 - c * 3])).flat();

function SatelliteImage() {
  return (
    <svg
      viewBox="0 0 1110 899"
      preserveAspectRatio="xMidYMid slice"
      className="block h-full w-full"
      role="img"
      aria-label="Satellite view around my location"
    >
      <defs>
        <filter id="foliage" x="-5%" y="-5%" width="110%" height="110%" colorInterpolationFilters="sRGB">
          <feTurbulence type="fractalNoise" baseFrequency="0.045" numOctaves="4" seed="4" result="n" />
          <feDisplacementMap in="SourceGraphic" in2="n" scale="70" xChannelSelector="R" yChannelSelector="G" result="d" />
          <feColorMatrix in="n" type="matrix" values="0 0 0 0 0.09 0 0 0 0 0.14 0 0 0 0 0.14 4 3 0 0 -3.5" result="dark" />
          <feComposite in="dark" in2="d" operator="in" result="shade" />
          <feMerge>
            <feMergeNode in="d" />
            <feMergeNode in="shade" />
          </feMerge>
        </filter>
        <filter id="rough" x="0" y="0" width="100%" height="100%" colorInterpolationFilters="sRGB">
          <feTurbulence type="fractalNoise" baseFrequency="0.08" numOctaves="2" seed="9" result="n" />
          <feDisplacementMap in="SourceGraphic" in2="n" scale="3" xChannelSelector="R" yChannelSelector="G" result="d" />
          <feGaussianBlur in="d" stdDeviation="0.8" />
        </filter>
        <filter id="grain" x="0" y="0" width="100%" height="100%" colorInterpolationFilters="sRGB">
          <feTurbulence type="fractalNoise" baseFrequency="0.06 0.05" numOctaves="4" seed="12" />
          <feColorMatrix type="matrix" values="1.3 0 0 0 -0.13 1.3 0 0 0 -0.13 1.3 0 0 0 -0.13 0 0 0 0 1" />
        </filter>
        <radialGradient id="flare">
          <stop offset="0" stopColor="#f3c6b0" />
          <stop offset="0.5" stopColor="#c3b799" stopOpacity="0.5" />
          <stop offset="1" stopColor="#8a9c80" stopOpacity="0" />
        </radialGradient>
        <radialGradient id="tint">
          <stop offset="0" stopColor="#8f9a38" stopOpacity="0.6" />
          <stop offset="1" stopColor="#8f9a38" stopOpacity="0" />
        </radialGradient>
      </defs>

      <rect width="1110" height="899" fill="#6d6a6b" />
      <g filter="url(#rough)">
        <g transform={NW}>
          <Shapes items={nwGround} />
          <Trees items={nwTrees} />
          <Strokes items={nwLines} />
          {roofVents.map(([x, y], i) => (
            <g key={i} fill="#3a3434">
              <rect x={x - 38} y={y + 2} width="22" height="8" />
              <rect x={x - 14} y={y - 6} width="30" height="17" rx="4" />
              <rect x={x + 16} y={y} width="20" height="8" />
              <rect x={x - 5} y={y - 32} width="8" height="18" />
              <rect x={x - 50} y={y + 32} width="8" height="18" />
              <rect x={x + 36} y={y + 24} width="8" height="18" />
              <rect x={x - 60} y={y - 66} width="34" height="7" fill="#b9b7b6" />
              <rect x={x} y={y - 72} width="34" height="7" fill="#b9b7b6" />
            </g>
          ))}
          <ellipse cx="840" cy="955" rx="50" ry="60" fill="url(#flare)" />
          <ellipse cx="960" cy="790" rx="50" ry="30" fill="url(#tint)" />
          <ellipse cx="540" cy="835" rx="45" ry="30" fill="url(#tint)" />
          <ellipse cx="1390" cy="840" rx="90" ry="45" fill="url(#tint)" />
          <ellipse cx="155" cy="1075" rx="45" ry="40" fill="url(#tint)" />
          <Cars items={nwCars} />
          <rect x="1490" y="535" width="34" height="76" rx="6" fill="#dac42f" />
          <rect x="1497" y="540" width="20" height="10" fill="#5b5422" />
        </g>
        <g transform={NE}>
          <Shapes items={neGround} />
          <Shapes items={nePitchedRoof} />
          <Trees items={neTrees} />
          <Shapes items={neOverTrees} />
          <Strokes items={neLines} />
          {windows.map(([x, y], i) => (
            <rect key={i} x={x} y={y} width="15" height="9" fill="#35414a" />
          ))}
          <rect x="0" y="285" width="35" height="34" fill="#6168a8" />
          <rect x="0" y="345" width="40" height="52" rx="8" fill="#fff3cf" />
          <path d="M515 195 L522 155 L535 170 L543 198 Z M580 192 L590 150 L606 165 L606 196 Z" fill="#fff6dd" />
          {Array.from({ length: 90 }, (_, i) => (
            <circle
              key={i}
              cx={1092 + ((i * 67) % 183)}
              cy={362 + ((i * 41) % 167)}
              r={5 + ((i * 5) % 9)}
              fill={["#dcd8d3", "#9d8a84", "#c5a99c", "#eeeae3", "#77776c"][i % 5]}
            />
          ))}
          <rect x="285" y="518" width="45" height="9" fill="#3c4446" />
          <rect x="295" y="532" width="35" height="7" fill="#3c4446" />
          <rect x="330" y="486" width="38" height="15" fill="#4c5557" />
          <rect x="97" y="752" width="80" height="24" fill="#302c29" />
          <rect x="97" y="776" width="80" height="30" fill="#c6cfd1" />
          <path d="M1235 1000 L1262 990 L1302 1078 L1278 1092 Z M1285 990 L1308 980 L1335 1055 L1315 1068 Z" fill="#efe7d0" />
          <path d="M1240 975 L1262 962 L1270 990 L1240 1000 Z M1286 975 L1310 968 L1315 985 L1288 996 Z" fill="#2c2520" />
          <rect x="1056" y="1020" width="27" height="68" rx="6" fill="#bfc4c9" />
          <path d="M1375 1290 L1400 1290 L1412 1365 L1390 1368 Z" fill="#f0eae2" />
          <Cars items={neCars} />
        </g>
        <g transform={SW}>
          <Shapes items={swGround} />
          <Strokes items={swLines} />
          <g fill="#4a3f38">
            <path d="M770 640 L910 612 L912 640 L780 665 Z M650 670 L712 658 L712 682 L652 695 Z" fill="#634a3f" />
            {[[762, 485], [1005, 450], [1405, 427], [512, 668], [1080, 848], [630, 990], [570, 988], [880, 1155], [1458, 505], [318, 1088], [1130, 1130], [1520, 1048], [85, 735], [118, 112], [1300, 822]].map(([x, y], i) => (
              <rect key={i} x={x - 9} y={y - 8} width="18" height="16" rx="4" />
            ))}
          </g>
          <path d="M235 95 V150 M255 90 V160 M315 80 V160 M290 90 V160" stroke="#a88f88" strokeWidth="9" />
          <path d="M280 75 L325 70 L325 90 L285 95 Z" fill="#2c2422" />
          <Cars items={swCars} />
        </g>
        <g transform={SE}>
          <Shapes items={seGround} />
          <Trees items={seTrees} />
          <Strokes items={seLines} />
          <g fill="#4a423c">
            {[[210, 288], [330, 460], [355, 440], [683, 430], [978, 438], [935, 275], [862, 190], [915, 178], [828, 200], [790, 158], [88, 600], [378, 862], [420, 858], [448, 855], [930, 806], [1020, 772], [112, 940], [1125, 208], [1050, 380], [1080, 548], [535, 180], [1465, 1060], [1480, 1110], [50, 190], [848, 380]].map(([x, y], i) => (
              <rect key={i} x={x - 8} y={y - 7} width="16" height="14" rx="4" />
            ))}
          </g>
          <path d="M650 245 L772 230 L772 262 L652 275 Z" fill="#5a3a2d" />
          <path d="M690 150 L768 150 L772 230 L700 240 Z" fill="#a08a80" />
          <path d="M1010 828 L1060 825 L1060 860 L1012 862 Z" fill="#3b2923" />
          <path d="M1015 868 L1065 865 L1070 920 L1022 922 Z" fill="#c8a795" />
          <path d="M525 1085 L595 1078 L597 1105 L530 1112 Z" fill="#3e4248" />
          <Cars items={seCars} />
        </g>
      </g>
      <rect width="1110" height="899" filter="url(#grain)" opacity="0.2" className="mix-blend-soft-light" />
      <rect y="898" width="1110" height="1" fill="#4b4b4b" />
    </svg>
  );
}

function MapPin() {
  return (
    <svg width="86" height="101" viewBox="0 0 86 101" className="block" aria-hidden="true">
      <defs>
        <radialGradient id="pin" cx="43" cy="36" r="56" gradientUnits="userSpaceOnUse">
          <stop offset="0" stopColor="#ff6d70" />
          <stop offset="0.5" stopColor="#fc6064" />
          <stop offset="0.8" stopColor="#e84a51" />
          <stop offset="1" stopColor="#c93a43" />
        </radialGradient>
      </defs>
      <path d="M43 101 C40 93 36 88 29 84 C12 78 1 62 1 44 A42 42 0 0 1 85 44 C85 62 74 78 57 84 C50 88 46 93 43 101 Z" fill="url(#pin)" />
      <path
        fillRule="evenodd"
        fill="#fff"
        d="M43 19 a10 10 0 0 1 3 19.500 L45 64 Q43 76 41 64 L40 38.500 A10 10 0 0 1 43 19 Z M40 22 a3.500 3.500 0 1 0 0.010 0 Z"
      />
    </svg>
  );
}

function StatusIcons() {
  return (
    <svg width="236" height="40" viewBox="0 0 236 40" aria-hidden="true">
      <g fill="#363636">
        <rect x="1" y="28" width="10" height="10" rx="3" />
        <rect x="17" y="28" width="10" height="10" rx="3" />
        <rect x="33" y="28" width="10" height="10" rx="3" />
        <rect x="49" y="28" width="10" height="10" rx="3" />
      </g>
      <g fill="#fff">
        <path d="M81 12 C95 -2 117 -2 131 12 L127 17 Q126 17.500 125 16.500 C114 6 98 6 87 16.500 Q86 17.500 85 17 Z" />
        <path d="M90 21 C99 12 113 12 122 21 L117.500 26 Q117 26.500 116 25.500 C110 20 102 20 96 25.500 Q95 26.500 94.500 26 Z" />
        <path d="M99 29.500 C103 25.500 109 25.500 113.500 29.500 Q114 30 113.500 30.700 L107 37.300 Q106 38.300 105 37.300 L99 30.700 Q98.500 30 99 29.500 Z" />
        <rect x="160" y="6" width="63" height="27" rx="8" />
      </g>
      <rect x="155.500" y="1.500" width="72" height="36" rx="12" fill="none" stroke="#666" strokeWidth="3" />
      <path d="M232 14 Q236 16 236 19.500 Q236 23 232 25 Z" fill="#808080" />
    </svg>
  );
}

function TextField({ label }: { label: string }) {
  return (
    <input
      type="text"
      aria-label={label}
      placeholder={label}
      className="block h-[103px] w-full min-w-0 rounded-2xl border border-[#cbcbcd] bg-white px-5 text-[48px] text-black outline-none placeholder:text-[#c5c5c7]"
    />
  );
}

export default function App() {
  return (
    <div className="flex min-h-screen flex-col bg-black font-['Inter','Liberation_Sans',sans-serif]">
      <header className="flex h-[186px] items-start justify-between pt-[64px] pr-[106px] pl-[158px]">
        <time className="text-[52px] leading-[64px] font-semibold text-white">11:49</time>
        <div className="pt-3">
          <StatusIcons />
        </div>
      </header>
      <div className="mx-12 h-[60px] rounded-t-[34px] bg-[#e0e0e0]" />

      <main className="-mt-[30px] flex flex-1 flex-col rounded-t-[38px] bg-white px-12 pt-[149px]">
        <form className="flex flex-1 flex-col" onSubmit={(e) => e.preventDefault()}>
          <div className="mx-12 rounded-[18px] bg-[linear-gradient(101deg_in_oklab,#ffffff,#007aff)] p-12 shadow-[0_0_60px_#007aff]">
            <TextField label="Description" />
          </div>

          <div className="mt-[119px] px-12">
            <TextField label="Current Price" />
          </div>

          <section
            aria-label="Map"
            className="relative mt-[72px] aspect-[1110/899] overflow-hidden rounded-[62px] shadow-[0_0_66px_rgba(0,0,0,0.36)]"
          >
            <SatelliteImage />
            <div className="absolute inset-0 grid grid-rows-2">
              <div className="flex items-end justify-center">
                <MapPin />
              </div>
              <div className="flex items-start justify-center pt-1">
                <span className="text-[32px] leading-9 font-semibold text-white [-webkit-text-stroke:8px_#000] [paint-order:stroke_fill]">
                  My Location
                </span>
              </div>
            </div>
            <div className="absolute bottom-[22px] left-8 flex items-center text-white">
              <FaApple className="h-[40px] w-[30px]" aria-hidden="true" />
              <span className="ml-1 text-[44px] leading-[54px] [text-shadow:0_1px_3px_rgba(0,0,0,0.5)]">Maps</span>
              <a
                href="#legal"
                className="ml-7 pt-2 text-[28px] leading-8 text-[#d3d0cf] underline decoration-2 underline-offset-[5px] [text-shadow:0_0_3px_rgba(0,0,0,0.5)]"
              >
                Legal
              </a>
            </div>
          </section>

          <div className="mt-[72px] px-12">
            <TextField label="Max People" />
          </div>

          <button
            type="submit"
            className="mt-[119px] h-[157px] self-center rounded-[28px] bg-[#007aff] px-12 text-[48px] text-white"
          >
            Create Post
          </button>

          <div className="mt-auto mb-6 flex justify-center">
            <div className="h-[15px] w-[432px] rounded-full bg-[linear-gradient(to_right,transparent_85%,#c0c0c0),linear-gradient(#505250,#7c7c7c)]" />
          </div>
        </form>
      </main>
    </div>
  );
}
